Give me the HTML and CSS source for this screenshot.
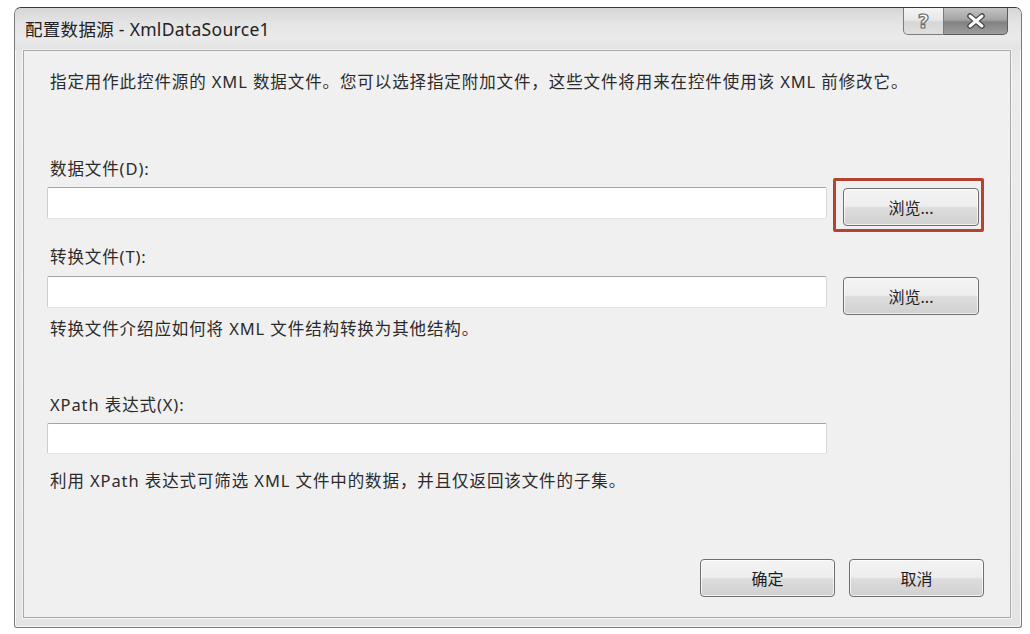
FILE: index.html
```html
<!DOCTYPE html>
<html lang="zh-CN">
<head>
<meta charset="utf-8">
<title>配置数据源 - XmlDataSource1</title>
<link rel="stylesheet" href="styles.css">
</head>
<body>
<div class="window">
  <div class="titlebar">
    <div class="title">配置数据源 - XmlDataSource1</div>
    <div class="caption-buttons">
      <div class="cap-btn help"><span class="help-glyph">?</span></div>
      <div class="cap-btn close">
        <svg width="24" height="18" viewBox="0 0 24 18">
          <path d="M6 4 L18 14 M18 4 L6 14" stroke="#3f3f3f" stroke-width="5.5" stroke-linecap="round"/>
          <path d="M6 4 L18 14 M18 4 L6 14" stroke="#ffffff" stroke-width="3" stroke-linecap="round"/>
        </svg>
      </div>
    </div>
  </div>
  <div class="content">
    <p class="text intro">指定用作此控件源的 XML 数据文件。您可以选择指定附加文件，这些文件将用来在控件使用该 XML 前修改它。</p>

    <p class="text label label-data">数据文件(D):</p>
    <div class="row">
      <div class="input"></div>
      <div class="btn-wrap">
        <div class="btn browse">浏览...</div>
        <div class="highlight"></div>
      </div>
    </div>

    <p class="text label label-transform">转换文件(T):</p>
    <div class="row">
      <div class="input"></div>
      <div class="btn-wrap">
        <div class="btn browse">浏览...</div>
      </div>
    </div>
    <p class="text desc-transform">转换文件介绍应如何将 XML 文件结构转换为其他结构。</p>

    <p class="text label label-xpath">XPath 表达式(X):</p>
    <div class="input input-xpath"></div>
    <p class="text desc-xpath">利用 XPath 表达式可筛选 XML 文件中的数据，并且仅返回该文件的子集。</p>

    <div class="footer">
      <div class="btn footer-btn">确定</div>
      <div class="btn footer-btn">取消</div>
    </div>
  </div>
</div>
</body>
</html>
```
FILE: styles.css
```css
html, body {
  margin: 0;
  padding: 0;
  background: #ffffff;
}

body {
  width: 1030px;
  height: 634px;
  overflow: hidden;
  font-family: "Noto Sans", "Noto Sans CJK SC", sans-serif;
  color: #2b2b2b;
}

.window {
  box-sizing: border-box;
  margin: 7px 0 0 14px;
  width: 1008px;
  height: 621px;
  border: 1px solid #7a7a7a;
  border-top-color: #3a3a3a;
  border-radius: 7px 7px 3px 3px;
  background: linear-gradient(#dedede, #ececec 12%, #e9e9e9 60%, #e4e4e4);
  box-shadow: inset 0 0 0 1px rgba(255, 255, 255, 0.75);
  display: flex;
  flex-direction: column;
}

.titlebar {
  height: 42px;
  display: flex;
  align-items: flex-start;
  justify-content: space-between;
  background: linear-gradient(#d6d6d6, #e4e4e4 35%, #eaeaea 70%, #e2e2e2);
  border-radius: 6px 6px 0 0;
}

.title {
  align-self: center;
  padding-left: 10px;
  font-size: 17.5px;
  letter-spacing: 0.3px;
  line-height: 22px;
  color: #222;
}

.caption-buttons {
  display: flex;
  margin-right: 13px;
}

.cap-btn {
  box-sizing: border-box;
  height: 27px;
  display: flex;
  align-items: center;
  justify-content: center;
  border: 1px solid #7c7c7c;
  border-top: none;
}

.help {
  width: 41px;
  border-radius: 0 0 0 5px;
  background: linear-gradient(#f4f4f4, #e8e8e8 45%, #d6d6d6 55%, #e0e0e0);
}

.help-glyph {
  font-family: "DejaVu Sans", sans-serif;
  font-weight: bold;
  font-size: 20px;
  line-height: 20px;
  color: #f6f6f6;
  -webkit-text-stroke: 1.2px #6f6f6f;
}

.close {
  width: 64px;
  border-left: none;
  border-color: #5c5c5c;
  border-radius: 0 0 5px 0;
  background: linear-gradient(#c4c4c4, #a4a4a4 45%, #828282 55%, #9e9e9e);
}

.content {
  box-sizing: border-box;
  flex: 1;
  margin: 0 10px 9px 8px;
  border: 1px solid #a9a9a9;
  background: #f0f0f0;
  box-shadow: 0 0 0 1px rgba(255, 255, 255, 0.6);
  padding: 20px 26px 0 23px;
  display: flex;
  flex-direction: column;
}

.text {
  margin: 0;
  padding-left: 3px;
  font-size: 16.5px;
  letter-spacing: 0.9px;
  line-height: 22px;
  white-space: nowrap;
}

.label-data {
  margin-top: 65px;
  margin-bottom: 7px;
}

.label-transform {
  margin-top: 20px;
  margin-bottom: 8px;
}

.desc-transform {
  margin-top: 3px;
}

.label-xpath {
  margin-top: 54px;
  margin-bottom: 7px;
}

.desc-xpath {
  margin-top: 16px;
}

.row {
  display: flex;
  align-items: flex-start;
  gap: 16px;
}

.input {
  box-sizing: border-box;
  width: 780px;
  height: 32px;
  background: #ffffff;
  border: 1px solid;
  border-color: #a3a3a3 #d8d8d8 #e4e4e4 #cdcdcd;
  border-radius: 2px;
}

.input-xpath {
  height: 31px;
}

.btn-wrap {
  position: relative;
  margin-top: 1px;
}

.btn {
  box-sizing: border-box;
  height: 38px;
  display: flex;
  align-items: center;
  justify-content: center;
  border: 1px solid #6f6f6f;
  border-radius: 4px;
  background: linear-gradient(#f4f4f4, #ededed 48%, #dddddd 52%, #d0d0d0);
  box-shadow: inset 0 0 0 1px rgba(255, 255, 255, 0.7);
  font-size: 16px;
  color: #1e1e1e;
}

.browse {
  width: 136px;
}

.highlight {
  position: absolute;
  top: -10px;
  left: -10px;
  right: -5px;
  bottom: -6px;
  border: 3px solid #b5432f;
  border-radius: 2px;
}

.footer {
  margin-top: 67px;
  display: flex;
  justify-content: flex-end;
  gap: 14px;
}

.footer-btn {
  width: 135px;
}
```
